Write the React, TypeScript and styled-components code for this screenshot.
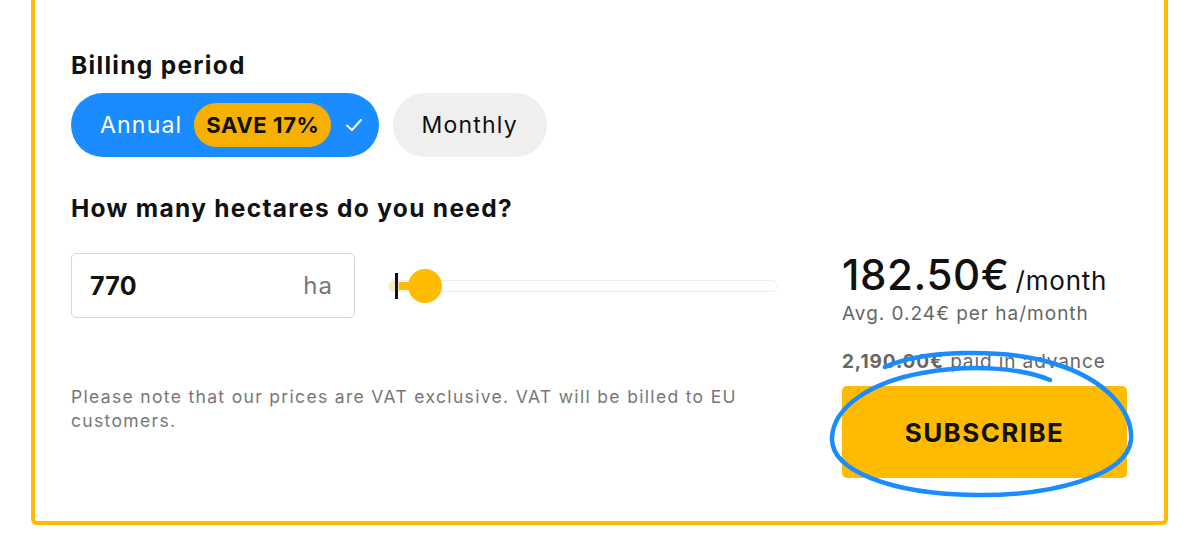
import React from "react";
import styled, { createGlobalStyle } from "styled-components";

const GlobalStyle = createGlobalStyle`
  html, body { margin: 0; padding: 0; background: #ffffff; }
  body { font-family: Inter, "Noto Sans", sans-serif; color: #111; }
  * { box-sizing: border-box; }
`;

const Page = styled.div`
  width: 1200px;
  height: 556px;
  padding: 0 32px 31px 31px;
  display: flex;
  flex-direction: column;
`;

const Card = styled.section`
  flex: 1;
  border: 4px solid #ffbb00;
  border-top: none;
  border-radius: 0 0 6px 6px;
  padding: 50px 37px 0 36px;
  display: flex;
  flex-direction: column;
`;

const Heading = styled.h3`
  margin: 0;
  font-size: 24.5px;
  font-weight: 700;
  line-height: 30px;
  color: #111;
  letter-spacing: 1.3px;
`;

const ToggleRow = styled.div`
  display: flex;
  gap: 14px;
  margin-top: 13px;
`;

const Pill = styled.button<{ $active?: boolean }>`
  height: 64px;
  border: none;
  border-radius: 32px;
  padding: 0 ${(p) => (p.$active ? "16px" : "29px")} 0 29px;
  display: flex;
  align-items: center;
  gap: 12px;
  font-family: inherit;
  font-size: 23px;
  font-weight: 400;
  letter-spacing: 1.2px;
  background: ${(p) => (p.$active ? "#1a8cff" : "#efefef")};
  color: ${(p) => (p.$active ? "#ffffff" : "#111")};
`;

const SaveBadge = styled.span`
  height: 44px;
  padding: 0 11px 0 12px;
  border-radius: 22px;
  background: #f5b000;
  color: #111;
  font-weight: 700;
  font-size: 22px;
  letter-spacing: 0.6px;
  display: flex;
  align-items: center;
`;

const Check = styled.svg`
  width: 18px;
  height: 18px;
  margin-left: 2px;
`;

const Main = styled.div`
  display: flex;
  gap: 62px;
  margin-top: 36px;
`;

const LeftCol = styled.div`
  flex: 1;
  display: flex;
  flex-direction: column;
`;

const RightCol = styled.div`
  width: 285px;
  display: flex;
  flex-direction: column;
  padding-top: 56px;
`;

const InputRow = styled.div`
  display: flex;
  align-items: center;
  gap: 33px;
  margin-top: 30px;
`;

const InputBox = styled.div`
  width: 284px;
  height: 65px;
  border: 1.5px solid #d6d6d6;
  border-radius: 5px;
  display: flex;
  align-items: center;
  justify-content: space-between;
  padding: 0 21px 0 18px;
`;

const Value = styled.span`
  font-size: 25px;
  font-weight: 700;
  color: #111;
  letter-spacing: 0.3px;
`;

const Unit = styled.span`
  font-size: 24px;
  color: #777;
  letter-spacing: 1px;
`;

const SliderWrap = styled.div`
  position: relative;
  width: 390px;
  height: 36px;
  display: flex;
  align-items: center;
`;

const Track = styled.div`
  width: 100%;
  height: 12px;
  border: 1.5px solid #eeeeee;
  border-radius: 6px;
  background: #fff;
  overflow: hidden;
  display: flex;
`;

const TrackFill = styled.div`
  width: 12px;
  height: 100%;
  background: #fde9b5;
`;

const Connector = styled.div`
  position: absolute;
  left: 11px;
  top: 14px;
  width: 26px;
  height: 8px;
  background: #ffbb00;
`;

const Thumb = styled.div`
  position: absolute;
  left: 20px;
  top: 1px;
  width: 34px;
  height: 34px;
  border-radius: 50%;
  background: #ffbb00;
`;

const Caret = styled.div`
  position: absolute;
  left: 7px;
  top: 5px;
  width: 3px;
  height: 26px;
  background: #111;
`;

const Note = styled.p`
  margin: 67px 0 0;
  font-size: 17.5px;
  line-height: 24px;
  color: #777;
  letter-spacing: 1.33px;
  max-width: 700px;
`;

const Price = styled.div`
  display: flex;
  align-items: baseline;
  gap: 6px;
  color: #111;
`;

const Amount = styled.span`
  font-size: 42px;
  font-weight: 500;
  letter-spacing: 0.6px;
`;

const Per = styled.span`
  font-size: 26px;
  font-weight: 400;
  letter-spacing: 0.8px;
`;

const Avg = styled.div`
  font-size: 19px;
  color: #666;
  margin-top: 2px;
  letter-spacing: 1px;
`;

const Advance = styled.div`
  font-size: 19px;
  color: #666;
  margin-top: 25px;
  letter-spacing: 0.9px;
  b { font-weight: 700; }
`;

const ButtonArea = styled.div`
  position: relative;
  margin-top: 13px;
`;

const Subscribe = styled.button`
  width: 285px;
  height: 92px;
  border: none;
  border-radius: 5px;
  background: #ffbb00;
  color: #111;
  font-family: inherit;
  font-size: 26px;
  font-weight: 700;
  letter-spacing: 1.4px;
`;

const Scribble = styled.svg`
  position: absolute;
  left: -20px;
  top: -40px;
  width: 330px;
  height: 180px;
  pointer-events: none;
  overflow: visible;
`;

export default function App() {
  return (
    <>
      <GlobalStyle />
      <Page>
        <Card>
          <Heading>Billing period</Heading>
          <ToggleRow>
            <Pill $active>
              Annual
              <SaveBadge>SAVE 17%</SaveBadge>
              <Check viewBox="0 0 18 18">
                <path d="M2 9.5 L7 14 L16 4" fill="none" stroke="#fff" strokeWidth="2" strokeLinecap="round" strokeLinejoin="round" />
              </Check>
            </Pill>
            <Pill>Monthly</Pill>
          </ToggleRow>
          <Main>
            <LeftCol>
              <Heading>How many hectares do you need?</Heading>
              <InputRow>
                <InputBox>
                  <Value>770</Value>
                  <Unit>ha</Unit>
                </InputBox>
                <SliderWrap>
                  <Track>
                    <TrackFill />
                  </Track>
                  <Connector />
                  <Thumb />
                  <Caret />
                </SliderWrap>
              </InputRow>
              <Note>
                Please note that our prices are VAT exclusive. VAT will be billed to EU customers.
              </Note>
            </LeftCol>
            <RightCol>
              <Price>
                <Amount>182.50€</Amount>
                <Per>/month</Per>
              </Price>
              <Avg>Avg. 0.24€ per ha/month</Avg>
              <Advance>
                <b>2,190.00€</b> paid in advance
              </Advance>
              <ButtonArea>
                <Subscribe>SUBSCRIBE</Subscribe>
                <Scribble viewBox="0 0 330 180">
                  <path
                    d="M63 21 C 100 4, 180 2, 230 17 C 285 33, 311 66, 309 94 C 305 130, 230 150, 153 149 C 70 148, 8 125, 10 91 C 12 60, 50 36, 100 27 C 150 18, 200 22, 228 34"
                    fill="none"
                    stroke="#1a8cff"
                    strokeWidth="4.5"
                    strokeLinecap="round"
                  />
                </Scribble>
              </ButtonArea>
            </RightCol>
          </Main>
        </Card>
      </Page>
    </>
  );
}
